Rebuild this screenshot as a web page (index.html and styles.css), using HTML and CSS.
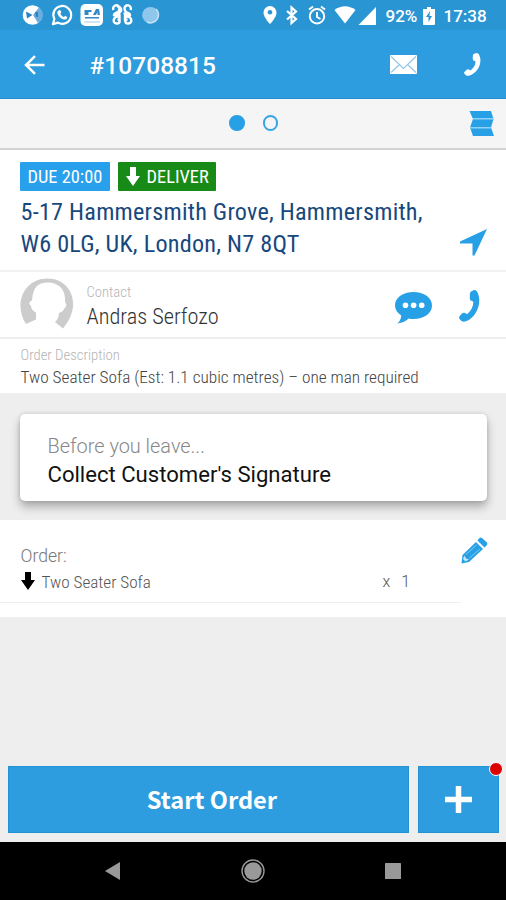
FILE: index.html
```
<!DOCTYPE html>
<html lang="en">
<head>
<meta charset="utf-8">
<title>#10708815</title>
<link rel="stylesheet" href="styles.css">
</head>
<body>
<div class="statusbar">
  <svg class="status-left" width="142" height="24" viewBox="0 0 142 24">
    <circle cx="10.500" cy="12" r="9.800" fill="#fff"/>
    <path d="M11 12L17 4.500a9 9 0 0 1-1 15.500z" fill="#6aaee0"/>
    <path d="M4 8.500l6.500 3.500L5 15.500zM13 9h3v5h-2z" fill="#2a83c4"/>
    <path d="M30.900 21.200l1.500-5.200a8.900 8.900 0 1 1 3.500 3.600z" fill="none" stroke="#fff" stroke-width="2.200" stroke-linejoin="round"/>
    <path d="M36.500 7.500c1-1 2-.6 2.300.4l.5 1.500-1 1.300c.8 1.600 2 2.600 3.600 3.300l1.200-1.200 2.200 1.100c0 2.300-2.400 3-4.300 2.300-3-1-5-3.200-5.700-6.100-.2-1 .3-1.800 1.200-2.600z" fill="#fff"/>
    <rect x="58.500" y="1" width="22.500" height="22" rx="5" fill="#fff"/>
    <path d="M62.500 7h7v2h-3v3h-4zM71 12l3-6h3l1 6h-2.500V9L74 12zM63 14h14v1.500H63z" fill="#3588c5"/>
    <path d="M62 19h16" stroke="#a4cee9"/>
    <path d="M91.500 7.500a3.200 3.200 0 1 1 6-1.500c0 5.500-5.500 3.500-5.500 6.500h3c1.500 0 2.500-1 2.500-2.500M95 4.500a3 3 0 1 1-1 5M108.500 7.500a3.200 3.200 0 1 0-6-1.500c0 5.500 5.500 3.500 5.500 6.500h-3c-1.500 0-2.500-1-2.500-2.500M97.500 14.500c-6-2-8 6-3 6.500 4 .3 4-4 1-4M97.500 12v6.500M103.500 14.500c6-2 8 6 3 6.500-4 .3-4-4-1-4M103 12v6.500" transform="translate(0 -.5)" fill="none" stroke="#fff" stroke-width="2.400"/>
    <circle cx="128.500" cy="12.200" r="8.300" fill="#8fc6ec"/>
    <path d="M134 6a8 8 0 0 1-9 13" fill="none" stroke="#c5e2f5" stroke-width="1.500"/>
  </svg>
  <svg class="status-right" width="115" height="24" viewBox="0 0 115 24">
    <path d="M7 3a6.500 6.500 0 0 0-6.500 6.500C.500 14.500 7 21 7 21s6.500-6.500 6.500-11.500A6.500 6.500 0 0 0 7 3z" fill="#fff"/><circle cx="7" cy="9.300" r="2.300" fill="#2a95d3"/>
    <path d="M24 8l9 8-4.500 4V4.500L33 8.500l-9 8" fill="none" stroke="#fff" stroke-width="2.200"/>
    <circle cx="54" cy="13.300" r="7.200" fill="none" stroke="#fff" stroke-width="2"/>
    <path d="M54 9v5l3.500 2M46 6.500l4-3M62 6.500l-4-3" fill="none" stroke="#fff" stroke-width="1.900"/>
    <path d="M71.500 7q10.500-7.500 21 0L82 20.500z" fill="#fff"/>
    <path d="M113 4v18H95.500z" fill="#fff"/>
  </svg>
  <span class="battery-text">92%</span>
  <svg class="battery" width="12" height="18" viewBox="0 0 12 18"><path d="M4 0h4v2h4v15q0 1-1 1H1q-1 0-1-1V2h4z" fill="#fff"/><path d="M7 4L3 10h2.500v5L9 9H6.500z" fill="#2a95d3"/></svg>
  <span class="clock">17:38</span>
</div>

<header class="appbar">
  <svg class="back" width="22" height="20" viewBox="0 0 22 20"><path d="M20.500 10H2.500M11 1.200L2 10l9 8.800" fill="none" stroke="#fff" stroke-width="2.500"/></svg>
  <h1 class="title">#10708815</h1>
  <svg class="mail" width="27" height="19" viewBox="0 0 27 19"><rect width="27" height="19" rx="1" fill="#fff"/><path d="M1 1.500l12.500 12L26 1.500M1 17.500l8.500-8M26 17.500l-8.500-8" fill="none" stroke="#8fc5e8" stroke-width="1.100"/></svg>
  <svg class="call" width="17" height="23" viewBox="0 0 21 32" preserveAspectRatio="none"><path d="M12 1.500l2.500-1.300q2-.5 3.300 1C24 11 18 27 7 31.300q-2.500 1-4.500-.3L.700 29.300q-1-1.500-.2-3l2.500-2.800q1.600-1.400 3.200-.4l1.800 1.100c4-3 6.500-7.700 6.200-12.700l-2-.7q-1.500-.7-1.400-2.500l.1-4.500q0-1.500 1.100-2.300z" fill="#fff"/></svg>
</header>

<div class="pager">
  <span class="dot active"></span><span class="dot"></span>
  <svg class="fold" width="25" height="25" viewBox="0 0 25 25"><path d="M.500 0H22l2.500 8L22 16.500 25 25H4L1 16.500 4 8z" fill="#28a0e6"/><path d="M4 7.800h20.500M1 16.700h21.500" stroke="#8fd4f8" stroke-width="1.500"/></svg>
</div>

<section class="address">
  <div class="badges">
    <span class="badge due">DUE 20:00</span>
    <span class="badge deliver"><svg width="14" height="19" viewBox="0 0 14 19"><path d="M4 0h6v9h4l-7 10L0 9h4z" fill="#fff"/></svg>DELIVER</span>
  </div>
  <div class="address-row">
    <p class="address-text">5-17 Hammersmith Grove, Hammersmith,<br>W6 0LG, UK, London, N7 8QT</p>
    <svg class="nav-arrow" width="27" height="27" viewBox="0 0 27 27"><path d="M27 0L14.500 26.500h-2V14.500H0v-2z" fill="#28a0e6"/></svg>
  </div>
</section>

<section class="contact">
  <svg class="avatar" width="55" height="51" viewBox="0 0 55 51"><path d="M6 46C-7 26 4 .5 27.500.5S63 27 43 50.500l-8-6.500c2.500-2 4-5 4-9 3-1 5-3 5.500-5 2-1 2.500-4 .5-6C46 12 39 4.500 28 4.500S13 10 12 22.500c-3 1-3.500 3.500-1 5.500 0 3 2 5 5 6.500v7z" fill="#ccc"/></svg>
  <div class="contact-info">
    <span class="label">Contact</span>
    <span class="name">Andras Serfozo</span>
  </div>
  <svg class="chat" width="37" height="32" viewBox="0 0 37 32"><path d="M18.500 0C29 0 37 5.500 37 13.500S29 27 18.500 27q-2.500 0-4.800-.5C11 29 7.500 31 2.500 31.500q3.500-3.500 3.700-8Q0 19.500 0 13.500C0 5.500 8 0 18.500 0z" fill="#28a0e6"/><g fill="#fff"><circle cx="10.500" cy="13.300" r="2.800"/><circle cx="18.600" cy="13.300" r="2.800"/><circle cx="26.700" cy="13.300" r="2.800"/></g></svg>
  <svg class="phone" width="21" height="32" viewBox="0 0 21 32"><path d="M12 1.500l2.500-1.300q2-.5 3.300 1C24 11 18 27 7 31.300q-2.500 1-4.500-.3L.700 29.300q-1-1.500-.2-3l2.500-2.800q1.600-1.400 3.200-.4l1.800 1.100c4-3 6.500-7.700 6.200-12.700l-2-.7q-1.500-.7-1.400-2.500l.1-4.500q0-1.500 1.100-2.300z" fill="#28a0e6"/></svg>
</section>

<section class="description">
  <span class="label">Order Description</span>
  <p class="description-text">Two Seater Sofa (Est: 1.1 cubic metres) – one man required</p>
</section>

<section class="notice">
  <div class="card">
    <span class="card-hint">Before you leave...</span>
    <span class="card-title">Collect Customer's Signature</span>
  </div>
</section>

<section class="order">
  <div class="order-head">
    <span class="order-label">Order:</span>
    <svg class="pencil" width="27" height="27" viewBox="0 0 27 27"><path d="M18 1.500Q19.500 0 21 1L26 5.500q1 1.500-.5 3L23.500 10.500l-7-7zM15 5l7 7L8 25l-7.500 1.500L1.500 18z" fill="#28a0e6"/><path d="M5 17.500L15.500 8M8.500 21L19 12" stroke="#80c8f2" stroke-width="1"/><path d="M3.500 18.500l1.500 3 3 1-3.500 2L2 22z" fill="#c5e8fb"/></svg>
  </div>
  <div class="item">
    <svg width="14" height="18" viewBox="0 0 14 18"><path d="M4 0h6v8h4l-7 10L0 8h4z"/></svg>
    <span class="item-name">Two Seater Sofa</span>
    <span class="qty"><span>x</span><span>1</span></span>
  </div>
</section>

<footer class="actions">
  <button class="btn start">Start Order</button>
  <button class="btn add"><svg width="27" height="27" viewBox="0 0 27 27"><path d="M13.500 0v27M0 13.500h27" stroke="#fff" stroke-width="5.500"/></svg><span class="alert"></span></button>
</footer>

<nav class="navbar">
  <svg width="15" height="18" viewBox="0 0 15 18"><path d="M15 0v18L0 9z" fill="#999"/></svg>
  <svg width="24" height="24" viewBox="0 0 24 24"><circle cx="12" cy="12" r="11" fill="none" stroke="#999" stroke-width="1.400"/><circle cx="12" cy="12" r="8.700" fill="#999"/></svg>
  <svg width="16" height="16" viewBox="0 0 16 16"><rect width="16" height="16" rx=".6" fill="#999"/></svg>
</nav>
</body>
</html>
```

FILE: styles.css
```
* { box-sizing: border-box; }
body {
  margin: 0;
  width: 506px;
  height: 900px;
  display: flex;
  flex-direction: column;
  background: #eee;
  font-family: Roboto, "Liberation Sans", sans-serif;
  overflow: hidden;
}
body > * { flex-shrink: 0; }
svg { display: block; flex-shrink: 0; }
h1, p { margin: 0; }
span, p, h1 { white-space: nowrap; }

.statusbar {
  height: 30px;
  padding: 3px 0 0 22px;
  display: flex;
  background: #2a95d3;
  color: #fff;
  font-size: 17px;
  font-weight: 500;
  line-height: 26px;
}
.status-right { margin-left: 99px; }
.battery-text { margin-left: 7.500px; width: 32px; }
.battery { margin: 4px 0 0 5px; }
.clock { margin-left: 9px; }

.appbar {
  height: 69px;
  padding-left: 24px;
  display: flex;
  background: #2d9de0;
  border-bottom: 1px solid #2590cf;
  color: #fff;
}
.back { margin-top: 25px; }
.title {
  width: 127px;
  margin-left: 43.500px;
  font-size: 24.400px;
  font-weight: 500;
  letter-spacing: .1px;
  line-height: 72px;
}
.mail { margin: 25px 0 0 173.500px; }
.call { margin: 23px 0 0 47px; }

.pager {
  height: 51px;
  padding: 0 0 1px 229px;
  display: flex;
  align-items: center;
  gap: 18px;
  background: #f5f5f5;
  border-bottom: 2px solid #d2d2d2;
}
.dot {
  width: 15.500px;
  height: 15.500px;
  border: 2px solid #35a5e8;
  border-radius: 50%;
}
.dot.active { background: #28a0e6; border-color: #28a0e6; }
.fold { margin-left: 173px; }

.address {
  height: 122px;
  padding: 12px 19px 0 20px;
  background: #fff;
  border-bottom: 2px solid #f1f1f1;
}
.badges { display: flex; gap: 8px; }
.badge {
  height: 29px;
  padding: 0 7.500px;
  display: flex;
  align-items: center;
  gap: 7px;
  border-radius: 1px;
  color: #fff;
  font-size: 18.4px;
  font-stretch: 75%;
}
.due { width: 90px; background: #28a0ec; }
.deliver { width: 98px; background: #178a17; }
.address-row { display: flex; justify-content: space-between; }
.address-text {
  margin: 5px 0 0 .5px;
  color: #17487d;
  font-size: 24.200px;
  font-weight: 370;
  font-stretch: 75%;
  letter-spacing: .24px;
  line-height: 32px;
}
.nav-arrow { margin-top: 38px; }

.contact {
  height: 67px;
  padding-left: 20px;
  display: flex;
  background: #fff;
  border-bottom: 2px solid #eee;
}
.avatar { margin-top: 6px; }
.contact-info {
  width: 308px;
  padding: 11px 0 0 11.500px;
  display: flex;
  flex-direction: column;
}
.label {
  color: #b4b4b4;
  font-size: 14.700px;
  font-weight: 300;
  font-stretch: 75%;
  line-height: 18px;
}
.name {
  margin-top: 1px;
  color: #333;
  font-size: 22.300px;
  font-weight: 300;
  font-stretch: 75%;
  line-height: 28px;
}
.chat { margin: 20px 0 0 12px; }
.phone { margin: 18px 0 0 27px; }

.description {
  height: 54px;
  padding: 7px 0 0 20.500px;
  background: #fff;
}
.description .label { display: block; }
.description-text {
  margin-top: 2px;
  color: #444;
  font-size: 17.250px;
  font-weight: 300;
  font-stretch: 75%;
  line-height: 23px;
}

.notice { height: 127px; padding: 21px 19px 0 20px; }
.card {
  height: 87px;
  padding: 20px 0 0 27.500px;
  display: flex;
  flex-direction: column;
  background: #fff;
  border-radius: 5px;
  box-shadow: 0 6px 10px rgba(0, 0, 0, .28), 0 0 4px rgba(0, 0, 0, .14);
}
.card-hint { color: #888; font-size: 19.900px; font-weight: 320; line-height: 25px; }
.card-title { color: #111; font-size: 22.100px; line-height: 31px; }

.order { height: 97px; background: #fff; }
.order-head { height: 48px; padding-left: 20.500px; display: flex; }
.order-label {
  width: 440.500px;
  padding-top: 24px;
  color: #777;
  font-size: 17.600px;
  font-weight: 300;
  line-height: 24px;
}
.pencil { margin-top: 17px; }
.item {
  width: 461px;
  height: 35px;
  padding-left: 20.500px;
  display: flex;
  border-bottom: 1px solid #eee;
  color: #555;
  font-size: 17.200px;
  font-weight: 300;
  line-height: 28px;
}
.item svg { margin-top: 4px; }
.item-name { width: 341px; margin-left: 7px; font-stretch: 75%; }
.qty { display: flex; gap: 11px; font-size: 16px; }

.actions { height: 225px; padding: 149px 7px 0 8px; display: flex; gap: 9px; }
.btn {
  position: relative;
  height: 67px;
  padding: 0 0 2px;
  display: flex;
  align-items: center;
  justify-content: center;
  background: #2d9de0;
  border: 1px solid #2192d2;
  color: #fff;
  font: 700 23.600px/36px "Noto Sans CJK SC", "Noto Sans", sans-serif;
}
.start { width: 401px; padding-left: 7px; }
.add { width: 81px; padding: 0; }
.alert {
  position: absolute;
  top: -5px;
  right: -5px;
  width: 14px;
  height: 14px;
  background: #dc0000;
  border: 1px solid #fff;
  border-radius: 50%;
}

.navbar {
  height: 58px;
  padding: 0 105px;
  display: flex;
  align-items: center;
  justify-content: space-between;
  background: #000;
}
```
